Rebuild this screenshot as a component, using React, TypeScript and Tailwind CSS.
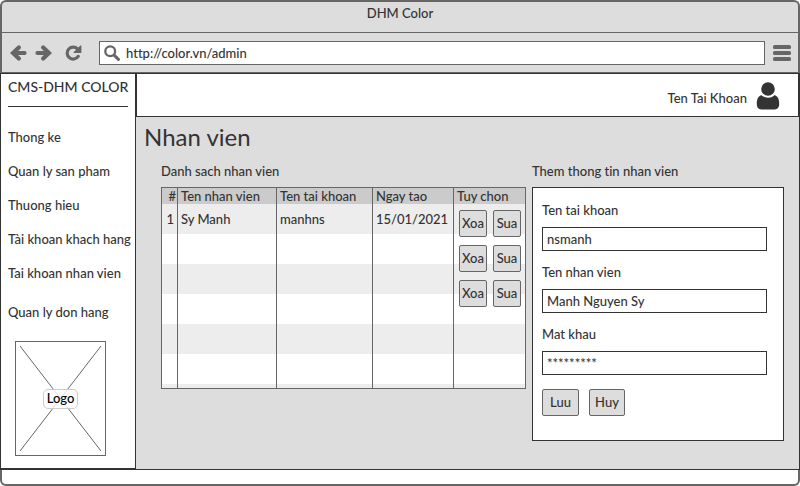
import React from "react";

const NAV_ITEMS = [
  "Thong ke",
  "Quan ly san pham",
  "Thuong hieu",
  "Tài khoan khach hang",
  "Tai khoan nhan vien",
  "Quan ly don hang",
];

const ROWS: string[][] = [
  ["1", "Sy Manh", "manhns", "15/01/2021"],
  ["", "", "", ""],
  ["", "", "", ""],
  ["", "", "", ""],
  ["", "", "", ""],
  ["", "", "", ""],
];

function ArrowLeft({ className = "" }: { className?: string }) {
  return (
    <svg viewBox="0 0 17 16" className={"h-4 w-[17px] " + className} fill="none" stroke="#666" aria-hidden="true">
      <path d="M8.8 2.4 3 8l5.8 5.6" strokeWidth="4.2" strokeLinecap="round" strokeLinejoin="miter" />
      <path d="M4 8h10.6" strokeWidth="4" strokeLinecap="round" />
    </svg>
  );
}

function Reload() {
  return (
    <svg viewBox="0 0 17 16" className="h-4 w-[17px]" aria-hidden="true">
      <path d="M12.6 4A6 6 0 1 0 13.2 11.4" fill="none" stroke="#666" strokeWidth="3.2" strokeLinecap="round" />
      <path d="M16.4 1v6.5a.6.6 0 0 1-.6.6H9.2c-.6 0-.8-.6-.4-1l6.6-6.5c.4-.4 1-.1 1 .4z" fill="#666" />
    </svg>
  );
}

function Search() {
  return (
    <svg viewBox="0 0 16 16" className="h-4 w-4 shrink-0" fill="none" stroke="#666" strokeLinecap="round" aria-hidden="true">
      <circle cx="6.2" cy="6.2" r="4.9" strokeWidth="2.3" />
      <path d="m10.4 10.4 4 4" strokeWidth="3" />
    </svg>
  );
}

function Menu() {
  return (
    <svg viewBox="0 0 18 16" className="h-4 w-[18px]" fill="#666" aria-hidden="true">
      <rect x="0" y="0" width="18" height="4" rx="1.6" />
      <rect x="0" y="6" width="18" height="4" rx="1.6" />
      <rect x="0" y="12" width="18" height="4" rx="1.6" />
    </svg>
  );
}

function User() {
  return (
    <svg viewBox="0 0 24 28" className="h-7 w-6" fill="#333" aria-hidden="true">
      <circle cx="12" cy="7" r="6.8" />
      <path d="M5.6 13.2C7.2 14.9 9.5 15.7 12 15.7s4.8-.8 6.4-2.5c3.4.5 4.8 4 4.8 8.8 0 3.3-1.7 5.4-4.4 5.4H5.2c-2.7 0-4.4-2.1-4.4-5.4 0-4.8 1.4-8.3 4.8-8.8z" />
    </svg>
  );
}

function Field({ id, label, value }: { id: string; label: string; value: string }) {
  return (
    <div className="flex flex-col gap-[7px]">
      <label htmlFor={id} className="h-5 leading-5">
        {label}
      </label>
      <input id={id} type="text" defaultValue={value} className="mr-4 h-6 border border-[#333] bg-white px-1 outline-none" />
    </div>
  );
}

const BUTTON = "rounded-[2px] border border-[#666] bg-[#ddd] pb-[2px] text-center";

export default function App() {
  return (
    <div className="flex min-h-screen flex-col bg-white font-['Lato','Noto_Sans',sans-serif] text-[13px] leading-5 font-medium text-[#333] [font-variant-ligatures:none]">
      <div className="rounded-t-md border-2 border-b-0 border-[#666] bg-[#ddd]">
        <div className="h-[31px] border-b border-[#666] pt-px text-center">DHM Color</div>
        <div className="flex h-[40px] items-center border-b border-[#666] pr-[7px] pl-2">
          <button type="button" aria-label="Back">
            <ArrowLeft />
          </button>
          <button type="button" aria-label="Forward" className="ml-2">
            <ArrowLeft className="rotate-180" />
          </button>
          <button type="button" aria-label="Reload" className="ml-[13px]">
            <Reload />
          </button>
          <div className="mr-2 ml-[17px] flex h-6 flex-1 items-center gap-1 border border-[#666] bg-white pl-1">
            <Search />
            <input aria-label="Address" type="text" defaultValue="http://color.vn/admin" className="h-5 flex-1 px-[2px] outline-none" />
          </div>
          <button type="button" aria-label="Menu">
            <Menu />
          </button>
        </div>
      </div>

      <div className="flex flex-1 border-t border-[#333]">
        <aside className="flex w-[136px] shrink-0 flex-col border border-t-0 border-b-2 border-[#333] bg-white px-[7px]">
          <div className="h-[33px] border-b border-[#333] pt-[3px] text-[14px] whitespace-nowrap">CMS-DHM COLOR</div>
          <nav className="mt-[13px]">
            <ul>
              {NAV_ITEMS.map((item) => (
                <li key={item} className="last:mt-[5px]">
                  <a href="#" className="block leading-[34px] whitespace-nowrap">
                    {item}
                  </a>
                </li>
              ))}
            </ul>
          </nav>
          <div className="relative mt-3 ml-[7px] flex h-[115px] w-[91px] items-center justify-center border border-[#666]">
            <svg viewBox="0 0 89 113" className="absolute inset-0 h-full w-full" stroke="#666" aria-hidden="true">
              <path d="M4 4l81 105M85 4L4 109" />
            </svg>
            <span className="relative h-5 rounded-[5px] border border-[#ccc] bg-white/80 px-[3px] leading-[17px] text-black">Logo</span>
          </div>
        </aside>

        <div className="flex min-w-0 flex-1 flex-col border-r border-b border-[#333] bg-[#ddd]">
          <header className="flex h-[43px] items-center justify-end gap-[9px] border-r border-b border-l border-[#333] bg-white pt-px pr-[18px]">
            <span className="pt-1">Ten Tai Khoan</span>
            <User />
          </header>

          <main className="pt-1 pr-[15px] pb-7 pl-2">
            <h1 className="text-[24px] leading-8 font-normal">Nhan vien</h1>
            <div className="mt-2 flex items-start gap-[6px] pl-[17px]">
              <section className="flex-1">
                <h2>Danh sach nhan vien</h2>
                <div className="relative mt-[6px] h-[202px] overflow-hidden border border-[#666] bg-white">
                  <table className="w-full table-fixed border-separate border-spacing-0 text-left">
                    <colgroup>
                      <col className="w-4" />
                      <col className="w-[99px]" />
                      <col className="w-[96px]" />
                      <col className="w-[81px]" />
                      <col />
                    </colgroup>
                    <thead>
                      <tr className="h-4 bg-[#cbcbcb] leading-4 whitespace-nowrap">
                        <th className="border-r border-[#666] p-0 pr-px text-right font-medium">#</th>
                        <th className="border-r border-[#666] p-0 pl-[3px] font-medium">Ten nhan vien</th>
                        <th className="border-r border-[#666] p-0 pl-[3px] font-medium">Ten tai khoan</th>
                        <th className="border-r border-[#666] p-0 pl-[3px] font-medium">Ngay tao</th>
                        <th className="p-0 pl-[3px] font-medium">Tuy chon</th>
                      </tr>
                    </thead>
                    <tbody>
                      {ROWS.map((row, i) => (
                        <tr key={i} className="h-[30px] odd:bg-[#ededed]">
                          <td className="border-r border-[#666] p-0 pr-[3px] text-right">{row[0]}</td>
                          <td className="border-r border-[#666] p-0 pl-[3px]">{row[1]}</td>
                          <td className="border-r border-[#666] p-0 pl-[3px]">{row[2]}</td>
                          <td className="border-r border-[#666] p-0 pl-[3px]">{row[3]}</td>
                          <td />
                        </tr>
                      ))}
                      <tr className="h-[30px] bg-[#ededed]">
                        <td className="border-r border-[#666]" />
                        <td className="border-r border-[#666]" />
                        <td className="border-r border-[#666]" />
                        <td className="border-r border-[#666]" />
                        <td />
                      </tr>
                    </tbody>
                  </table>
                  <div className="absolute top-[22px] right-1 flex flex-col gap-2">
                    {[0, 1, 2].map((n) => (
                      <div key={n} className="flex gap-[6px]">
                        <button type="button" className={BUTTON + " h-[27px] w-7"}>
                          Xoa
                        </button>
                        <button type="button" className={BUTTON + " h-[27px] w-7"}>
                          Sua
                        </button>
                      </div>
                    ))}
                  </div>
                </div>
              </section>

              <section className="w-[252px] shrink-0">
                <h2>Them thong tin nhan vien</h2>
                <form className="mt-[6px] flex flex-col gap-[11px] border border-[#333] bg-white pt-3 pb-6 pl-[9px]" onSubmit={(e) => e.preventDefault()}>
                  <Field id="account" label="Ten tai khoan" value="nsmanh" />
                  <Field id="name" label="Ten nhan vien" value="Manh Nguyen Sy" />
                  <Field id="password" label="Mat khau" value="*********" />
                  <div className="flex gap-[10px] pt-[3px]">
                    <button type="submit" className={BUTTON + " h-[27px] w-[37px]"}>
                      Luu
                    </button>
                    <button type="button" className={BUTTON + " h-[27px] w-9"}>
                      Huy
                    </button>
                  </div>
                </form>
              </section>
            </div>
          </main>
        </div>
      </div>

      <footer className="h-4 rounded-b-md border-2 border-t-0 border-[#666] bg-white" />
    </div>
  );
}
